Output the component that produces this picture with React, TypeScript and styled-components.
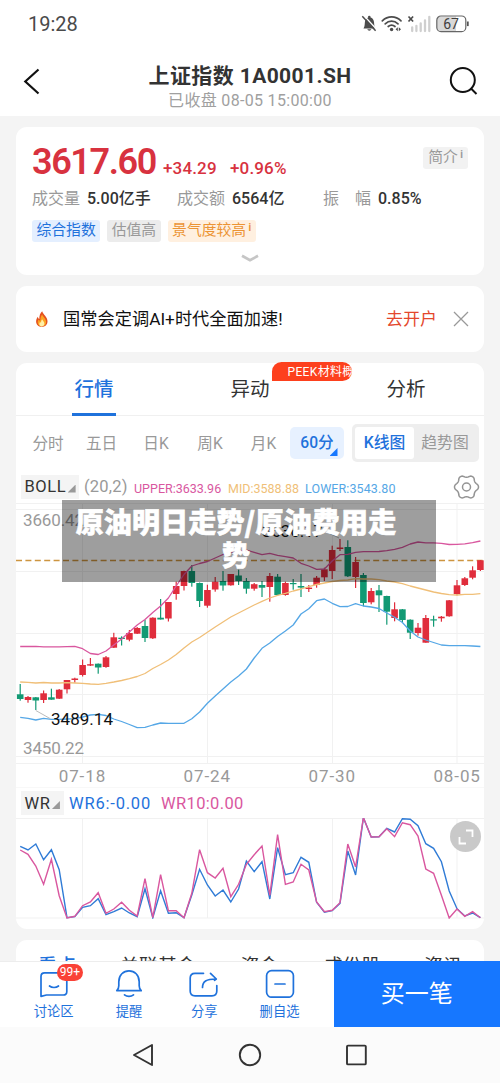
import React from 'react';
import styled, { createGlobalStyle } from 'styled-components';

const BLUE = '#1f72dc';
const RED = '#e02d3c';
const GREEN = '#129a74';
const PINK = '#d9579f';
const ORANGE = '#f0bf78';
const SKY = '#55a7e6';

const GlobalStyle = createGlobalStyle`
  * { box-sizing: border-box; }
  body {
    margin: 0;
    background: #f4f4f4;
    font-family: Roboto, "Noto Sans CJK SC", sans-serif;
    color: #333;
    overflow: hidden;
  }
  svg { display: block; flex: none; }
`;

const Screen = styled.div`
  width: 500px;
  height: 1083px;
  display: flex;
  flex-direction: column;
  overflow: hidden;
  background: #f4f4f4;
  white-space: nowrap;
`;

/* ---------- status bar and header ---------- */
const StatusBar = styled.div`
  height: 48px;
  flex: none;
  background: #fff;
  display: flex;
  align-items: center;
  justify-content: space-between;
  padding: 0 30px 0 28px;
`;
const Clock = styled.span`
  font-size: 20px;
  line-height: 24px;
  color: #4a4a4a;
`;
const Header = styled.header`
  height: 67.5px;
  flex: none;
  background: #fff;
  display: flex;
  justify-content: space-between;
  align-items: flex-start;
  padding: 16px 22px 0;
`;
const TitleBlock = styled.div`
  display: flex;
  flex-direction: column;
  align-items: center;
  margin-top: -1px;
`;
const Title = styled.h1`
  margin: 0;
  font-size: 21px;
  line-height: 26px;
  font-weight: 700;
  color: #333;
  letter-spacing: 0.4px;
`;
const Subtitle = styled.span`
  font-size: 16px;
  line-height: 20px;
  margin-top: 2px;
  color: #a0a0a0;
  letter-spacing: 0.32px;
`;

/* ---------- cards ---------- */
const Content = styled.main`
  flex: 1;
  min-height: 0;
  overflow: hidden;
  display: flex;
  flex-direction: column;
  gap: 11px;
  padding: 11.5px 16px 0;
`;
const Card = styled.section<{ $h: number }>`
  flex: none;
  height: ${(p) => p.$h}px;
  background: #fff;
  border-radius: 11px;
`;
const QuoteCard = styled(Card)`
  padding: 17px 16px 0;
  display: flex;
  flex-direction: column;
`;
const PriceRow = styled.div`
  display: flex;
  align-items: baseline;
  height: 36px;
  line-height: 36px;
  color: #d8323f;
`;
const Price = styled.span`
  font-size: 36px;
  font-weight: 600;
  letter-spacing: -1.4px;
  width: 131px;
`;
const Change = styled.span<{ $w: number }>`
  font-size: 17px;
  font-weight: 500;
  letter-spacing: 0.15px;
  width: ${(p) => p.$w}px;
`;
const Spacer = styled.span`
  flex: 1;
`;
const StatsRow = styled.div`
  display: flex;
  height: 24px;
  line-height: 24px;
  margin-top: 6.5px;
  font-size: 16px;
`;
const Stat = styled.div<{ $w: number }>`
  width: ${(p) => p.$w}px;
  display: flex;
  gap: 7px;
`;
const StatLabel = styled.span`
  color: #999;
`;
const StatValue = styled.span`
  font-weight: 500;
  color: #333;
`;
const TagRow = styled.div`
  display: flex;
  gap: 7px;
  margin-top: 9.5px;
`;
const Tag = styled.span<{ $bg: string; $fg: string }>`
  display: flex;
  height: 21.5px;
  line-height: 20.5px;
  padding: 0 4.5px;
  border-radius: 3px;
  font-size: 14.8px;
  background: ${(p) => p.$bg};
  color: ${(p) => p.$fg};
`;
const IntroTag = styled(Tag)`
  align-self: flex-start;
  margin-top: 3px;
  padding: 0 5px;
`;
const Info = styled.i`
  font-style: normal;
  font-size: 10px;
  line-height: 15px;
  font-weight: 700;
  margin-left: 2.5px;
`;
const ChevronRow = styled.div`
  display: flex;
  justify-content: center;
  padding-top: 12px;
`;
const NoticeCard = styled(Card)`
  display: flex;
  align-items: center;
  padding: 0 15px 0 18px;
`;
const NoticeText = styled.span`
  font-size: 17.2px;
  margin: 0 0 3px 13px;
  color: #111;
  letter-spacing: 0.04px;
`;
const NoticeLink = styled.span`
  font-size: 17px;
  color: #e4472c;
  margin: 0 16px 3px 0;
`;

/* ---------- quote tabs ---------- */
const ChartCard = styled(Card)`
  display: flex;
  flex-direction: column;
  position: relative;
`;
const Tabs = styled.div`
  display: flex;
  height: 53px;
  border-bottom: 1px solid #f0f0f0;
`;
const Tab = styled.div<{ $active?: boolean }>`
  flex: 1;
  display: flex;
  justify-content: center;
  position: relative;
  font-size: 19.5px;
  line-height: 53px;
  color: ${(p) => (p.$active ? BLUE : '#333')};
  font-weight: ${(p) => (p.$active ? 500 : 400)};
  &::after {
    content: '';
    position: absolute;
    bottom: -1px;
    width: 44px;
    height: 3px;
    background: ${(p) => (p.$active ? BLUE : 'transparent')};
  }
`;
const HotBadge = styled.span`
  position: absolute;
  left: 100px;
  top: -1px;
  width: 80px;
  height: 19px;
  padding-left: 15.5px;
  overflow: hidden;
  border-radius: 10px 10px 10px 0;
  background: #fd401d;
  color: #fff;
  font-size: 12px;
  font-weight: 400;
  line-height: 20px;
  letter-spacing: 0.35px;
`;
const PeriodRow = styled.div`
  display: flex;
  align-items: center;
  height: 54px;
  padding-right: 5px;
`;
const Period = styled.span<{ $w: number }>`
  width: ${(p) => p.$w}px;
  font-size: 15.6px;
  margin-bottom: 3px;
  color: #999;
  text-align: center;
`;
const PeriodActive = styled.span`
  width: 54px;
  height: 32px;
  line-height: 33px;
  border-radius: 5px;
  background: #e7f1ff;
  color: ${BLUE};
  font-size: 15.6px;
  font-weight: 500;
  display: flex;
  justify-content: center;
  position: relative;
`;
const Corner = styled.i<{ $size: number; $color: string }>`
  width: ${(p) => p.$size}px;
  height: ${(p) => p.$size}px;
  background: ${(p) => p.$color};
  clip-path: polygon(100% 0, 100% 100%, 0 100%);
`;
const PeriodCorner = styled(Corner)`
  position: absolute;
  right: 6.5px;
  bottom: 3px;
`;
const Segment = styled.div`
  display: flex;
  margin-left: 8px;
  width: 127px;
  height: 38px;
  padding: 3px;
  border-radius: 5px;
  background: #eee;
`;
const SegmentItem = styled.span<{ $active?: boolean }>`
  flex: ${(p) => (p.$active ? '0 0 59px' : '1')};
  text-align: center;
  line-height: 31px;
  font-size: 15.8px;
  border-radius: 3px;
  font-weight: ${(p) => (p.$active ? 500 : 400)};
  color: ${(p) => (p.$active ? BLUE : '#999')};
  background: ${(p) => (p.$active ? '#fff' : 'transparent')};
`;
const IndicatorRow = styled.div<{ $h: number }>`
  display: flex;
  align-items: center;
  height: ${(p) => p.$h}px;
  padding: 0 4.5px;
`;
const IndicatorButton = styled.span<{ $w: number }>`
  display: flex;
  align-items: center;
  gap: 1.5px;
  width: ${(p) => p.$w}px;
  height: 24px;
  padding-left: 4px;
  background: #f4f4f4;
  font-size: 16.5px;
  letter-spacing: 0.55px;
  color: #333;
`;
const SmallCorner = styled(Corner)`
  margin-top: 4px;
`;
const IndicatorValue = styled.span<{ $c: string; $w: number; $size: number; $ls?: number; $pl?: number }>`
  width: ${(p) => p.$w}px;
  font-size: ${(p) => p.$size}px;
  color: ${(p) => p.$c};
  letter-spacing: ${(p) => p.$ls || 0}px;
  padding-left: ${(p) => p.$pl || 0}px;
  padding-top: ${(p) => (p.$size < 14 ? 3 : 0)}px;
`;
const ChartText = styled.text`
  font-family: Roboto, sans-serif;
  font-size: 17px;
`;
const ExpandButton = styled.span`
  position: absolute;
  right: 3px;
  bottom: 77px;
  width: 31px;
  height: 31px;
  border-radius: 50%;
  background: #c9c9c9;
  display: flex;
  align-items: center;
  justify-content: center;
`;
const Caption = styled.div`
  position: absolute;
  left: 46px;
  top: 137px;
  width: 374px;
  height: 82px;
  padding: 5px 38.5px 0 12.5px;
  background: rgba(0, 0, 0, 0.38);
  color: #fff;
  font-family: "Noto Sans CJK SC", sans-serif;
  font-weight: 900;
  font-size: 28px;
  line-height: 33px;
  letter-spacing: 0.15px;
  -webkit-text-stroke: 0.6px #fff;
  text-align: center;
`;

/* ---------- lower tabs, actions, navigation ---------- */
const NewsTabs = styled(Card)`
  display: flex;
  font-size: 19px;
  line-height: 53px;
`;
const NewsTab = styled.span<{ $w: number; $active?: boolean }>`
  width: ${(p) => p.$w}px;
  text-align: center;
  color: ${(p) => (p.$active ? BLUE : '#333')};
  font-weight: ${(p) => (p.$active ? 500 : 400)};
`;
const ActionBar = styled.div`
  height: 66px;
  flex: none;
  display: flex;
  background: #fff;
  padding-left: 16px;
  border-top: 1px solid #ededed;
`;
const Action = styled.div`
  width: 75.3px;
  display: flex;
  flex-direction: column;
  align-items: center;
  padding-top: 6px;
  gap: 4px;
  position: relative;
  font-size: 13.3px;
  line-height: 19px;
  color: ${BLUE};
`;
const CountBadge = styled.span`
  position: absolute;
  left: 41px;
  top: 2px;
  width: 26px;
  height: 17px;
  border-radius: 9px;
  background: #fa4136;
  color: #fff;
  font-size: 12px;
  line-height: 17px;
  text-align: center;
`;
const BuyButton = styled.div`
  margin-left: auto;
  margin-top: -1px;
  width: 166.5px;
  height: 66px;
  background: #1677ff;
  color: #fff;
  font-size: 24px;
  line-height: 67px;
  text-align: center;
`;
const NavBar = styled.nav`
  height: 56px;
  flex: none;
  background: #fbfbfb;
  display: flex;
  justify-content: center;
  align-items: center;
  gap: 84px;
`;

/* ---------- chart data ---------- */
const X0 = 4.2;
const STEP = 7.8;
const px = (i: number) => X0 + STEP * i;

// [rising, body top, body bottom, high, low]
const candles: [number, number, number, number, number][] = [
  [0, 694.3, 699, 684, 700.7], [1, 697, 700, 696, 702.7], [0, 697.3, 700.5, 697, 710], [1, 693.3, 700, 690.5, 703],
  [0, 697.3, 699.7, 688.7, 699.7], [1, 689.7, 698.7, 689, 699], [1, 680, 689.3, 680, 693.5], [1, 678.5, 680, 677.7, 682.7],
  [1, 665, 675, 659.5, 676.5], [1, 664.2, 665.6, 658, 666], [0, 663.7, 667.5, 663.5, 673.7], [1, 657.3, 667, 656, 667.8],
  [1, 637.3, 647.7, 632.8, 648], [0, 637.7, 639, 636.3, 645.5], [1, 633, 639.7, 630, 641.3], [1, 628, 633.7, 627, 634],
  [0, 626, 638, 620, 642], [1, 617.7, 638.3, 617.3, 639], [0, 617.7, 619.5, 599, 619.5], [1, 602, 618.5, 602, 621.5],
  [1, 586, 594, 581.7, 599.7], [1, 571, 586, 570.7, 590.5], [0, 571, 583, 565, 586.7], [0, 583, 601, 582.5, 607],
  [1, 590, 605.7, 584.7, 607.7], [1, 581.7, 589.5, 577, 591.7], [0, 581, 585.5, 571, 590.7], [1, 574, 585.3, 574, 585.7],
  [0, 575.5, 581, 569.7, 585], [0, 581, 588.7, 578, 593.7], [1, 584.2, 588.7, 583, 590.7], [0, 585, 587.7, 581, 597],
  [1, 576, 587, 573, 601.7], [0, 576.7, 595, 574, 595.7], [1, 583, 595, 581.7, 595.7], [0, 583, 584.2, 579, 589.7],
  [0, 586, 587.6, 574, 597], [1, 587.6, 589, 585, 592], [1, 577.7, 585, 576, 587.7], [1, 569.3, 577.3, 567.7, 581],
  [1, 550, 571, 545.7, 579], [1, 547.5, 549, 539, 551], [0, 547, 576.3, 540.3, 577], [1, 562, 577, 557, 588],
  [0, 575, 603, 573, 606.3], [1, 591, 602.3, 588, 604.3], [0, 590.3, 595.3, 585, 612], [0, 596, 611.7, 595.7, 624.7],
  [1, 609.3, 618, 602.3, 621.3], [0, 609.3, 620, 609, 622], [0, 619.7, 632.7, 619.3, 639], [1, 627.7, 633, 623, 635.7],
  [1, 618, 642.7, 615, 642.7], [0, 619.3, 620.5, 615.7, 626.7], [1, 616.7, 618.3, 616, 621.7], [1, 600.3, 616.3, 600, 616.7],
  [1, 585.3, 594, 580, 595.3], [1, 578.3, 585, 577, 586], [1, 570.3, 577.7, 566.3, 579.3], [1, 560.3, 570, 560, 571],
];

const upper = [646.5, 646.5, 646.3, 646.8, 646.8, 646.8, 646.6, 646.3, 648.7, 653.5, 654.5, 651, 645, 639, 632, 625, 619.5, 612.5, 606, 598, 586, 574.5, 566, 563.5, 561.5, 558, 554.5, 552, 551.7, 550, 552.3, 554.7, 553.3, 555.3, 556.7, 558, 563.3, 566, 569.3, 569, 561, 554.7, 554.3, 552.3, 551.7, 551.7, 551.5, 550.7, 549.3, 547.3, 544, 542, 542.8, 542.8, 543.3, 544.5, 544.3, 543.8, 542.7, 541];
const middle = [682, 682.3, 683, 682.5, 683, 683, 682.7, 683, 683.3, 684, 684.3, 683.3, 682, 680.5, 678.7, 676.5, 673.5, 668.5, 664.5, 660, 654.5, 648, 642, 637.5, 632.3, 627, 622, 617, 613, 609, 605, 601.3, 598, 595.3, 593.3, 591, 589, 586.7, 584.5, 583, 581.5, 580.5, 580, 578.7, 579, 579, 579.7, 581, 582, 583.7, 586, 588, 590, 592, 593.5, 594.7, 595, 594.3, 594.3, 593.7];
const lower = [717.3, 718.3, 720, 718.3, 719.3, 719.3, 719, 718.7, 717, 715, 714.3, 715.5, 719, 721.5, 724.5, 727.7, 727.3, 725, 723, 723.3, 723.3, 723.3, 718.7, 712, 703.3, 696, 689, 682, 676, 669, 658, 648.3, 643, 636.5, 631, 625, 614, 608.7, 600.7, 599, 603.3, 606.7, 606.5, 603.7, 606, 607, 608.5, 613, 617.3, 622.5, 631, 637, 640, 642.5, 645, 645.7, 645.7, 645.7, 646, 646.5];

// Williams %R in thirds of a pixel below the top of its row
const wr6 = [184, 195, 177, 224, 194, 254, 398, 395, 367, 362, 341, 389, 380, 369, 384, 395, 311, 398, 317, 385, 383, 398, 330, 253, 300, 333, 315, 351, 312, 228, 260, 230, 342, 188, 269, 263, 217, 232, 352, 382, 377, 355, 198, 270, 98, 156, 155, 130, 141, 101, 103, 122, 176, 190, 230, 318, 371, 393, 384, 398];
const wr10 = [195, 208, 243, 298, 223, 332, 399, 394, 362, 351, 323, 385, 372, 352, 376, 393, 281, 398, 269, 377, 377, 398, 325, 194, 263, 279, 250, 335, 298, 238, 209, 183, 331, 149, 298, 291, 238, 255, 351, 380, 376, 353, 177, 246, 98, 156, 155, 131, 155, 113, 119, 153, 252, 265, 331, 399, 372, 394, 380, 398];

const KTOP = 503;
const WTOP = 818;
const line = (ys: number[], f: (y: number) => number) => ys.map((y, i) => `${px(i).toFixed(1)},${f(y).toFixed(1)}`).join(' ');
const columns = [66.5, 191.5, 316.5, 441];

function KLineChart() {
  const y = (v: number) => v - KTOP;
  return (
    <svg width="468" height="285" viewBox="0 0 468 285">
      <g stroke="#f1f1f1" strokeWidth="1">
        {[0.5, 6.5, 68.5, 130.5, 191.5, 253.5, 260.5, 285].map((v) => <line key={v} x1="0" x2="468" y1={v} y2={v} />)}
        {columns.map((x) => <line key={x} x1={x} x2={x} y1="0" y2="260" />)}
      </g>
      <line x1="0" x2="468" y1="57.5" y2="57.5" stroke="#cd9540" strokeWidth="1.4" strokeDasharray="6 3.4" />
      <ChartText x="7" y="22.7" fill="#999" textLength="61">3660.42</ChartText>
      <ChartText x="7" y="250.5" fill="#999" textLength="61">3450.22</ChartText>
      {candles.map(([up, t, b, hi, lo], i) => (
        <g key={i} fill={up ? RED : GREEN}>
          <rect x={px(i) - 0.6} y={y(hi)} width="1.2" height={lo - hi} />
          <rect x={px(i) - 3.3} y={y(t)} width="6.6" height={b - t} />
        </g>
      ))}
      <g fill="none" strokeWidth="1.3" strokeLinejoin="round">
        <polyline points={line(upper, y)} stroke={PINK} />
        <polyline points={line(middle, y)} stroke={ORANGE} />
        <polyline points={line(lower, y)} stroke={SKY} />
      </g>
      <path d="M19.8 207.5 34 215.5M307 27l16 8" stroke="#bbb" strokeWidth="1" fill="none" />
      <ChartText x="35" y="222" fill="#111" textLength="62">3489.14</ChartText>
      <ChartText x="246" y="34" fill="#111" textLength="61">3636.17</ChartText>
      {['07-18', '07-24', '07-30', '08-05'].map((d, i) => (
        <ChartText key={d} x={42.7 + i * 124.9} y="278.6" fill="#999" textLength="46.5">{d}</ChartText>
      ))}
    </svg>
  );
}

function WRChart() {
  const y = (v: number) => 785 + v / 3 - WTOP;
  return (
    <svg width="468" height="101" viewBox="0 0 468 101">
      <g stroke="#f1f1f1" strokeWidth="1">
        <line x1="0" x2="468" y1="0.5" y2="0.5" />
        <line x1="0" x2="468" y1="100" y2="100" />
        {columns.map((x) => <line key={x} x1={x} x2={x} y1="0" y2="100" />)}
      </g>
      <g fill="none" strokeWidth="1.4" strokeLinejoin="miter">
        <polyline points={line(wr6, y)} stroke="#2f7bd6" />
        <polyline points={line(wr10, y)} stroke={PINK} />
      </g>
    </svg>
  );
}

// Six soft lobes around a centre hole
const gearPoints = Array.from({ length: 72 }, (_, k) => {
  const a = (k * Math.PI) / 36;
  const c = Math.cos(6 * a);
  const r = 10.9 + 1.1 * Math.sign(c) * Math.pow(Math.abs(c), 0.7);
  return `${(13.5 + r * Math.cos(a)).toFixed(2)},${(13 + r * Math.sin(a)).toFixed(2)}`;
}).join(' ');

function Gear() {
  return (
    <svg width="27" height="26" viewBox="0 0 27 26" fill="none" stroke="#949494" strokeWidth="1.5" strokeLinejoin="round">
      <polygon points={gearPoints} />
      <circle cx="13.5" cy="13" r="4" />
    </svg>
  );
}

function StatusIcons() {
  return (
    <svg width="110" height="20" viewBox="0 0 110 20" fill="none">
      <path d="M3.5 14.4C5 12.6 4.6 9.5 5 7.6 5.6 4.900 7 3.600 9 3.300c3 0 4.600 1.800 5 4.600.3 2.500 0 4.700 1.700 6.500Z" fill="#4c4c4c" />
      <circle cx="9.300" cy="3" r="1.300" fill="#4c4c4c" />
      <path d="M7.300 15.300h4c-.5 1.800-3.500 1.800-4 0Z" fill="#4c4c4c" />
      <path d="M3.600 1.200 17 15.800" stroke="#fff" strokeWidth="1.300" />
      <path d="M2.300 2.300 15.600 16.800" stroke="#4c4c4c" strokeWidth="1.500" />
      <g stroke="#4c4c4c" strokeWidth="1.700" strokeLinecap="round">
        <path d="M22.300 6.800c5.500-5.200 13.200-5.200 18.700 0" />
        <path d="M25.200 9.800c3.800-3.600 9-3.600 12.800 0" />
        <path d="M28.200 12.500c2-1.700 4.800-1.700 6.800 0" />
      </g>
      <circle cx="31.600" cy="15.500" r="1.700" fill="#4c4c4c" />
      <path d="M37.800 13.200v4l-2.200-2zM38.800 13.200v4l2.200-2z" fill="#4c4c4c" />
      <path d="m48.500 2.500 4.600 5M53.100 2.500l-4.600 5" stroke="#4c4c4c" strokeWidth="1.700" />
      <path d="M52.200 13.500v3.500M56.400 11.800v5.200M60.700 9.300v7.700M65 6.300v10.700M69.300 2.800v14.200" stroke="#cfcfcf" strokeWidth="2.300" strokeLinecap="round" />
      <path d="M81 2.400h15v15H81c-3 0-4.200-1.400-4.200-4.200V6.600c0-2.800 1.200-4.200 4.200-4.200Z" fill="#d8d8d8" />
      <rect x="76.800" y="2" width="29" height="15.600" rx="4.200" stroke="#666" strokeWidth="1.200" />
      <path d="M107.800 7.500v4.600" stroke="#555" strokeWidth="1.800" />
      <text x="91" y="14.700" textAnchor="middle" fontFamily="Roboto" fontSize="14" fill="#404040">67</text>
    </svg>
  );
}

function Flame() {
  return (
    <svg width="16" height="18" viewBox="0 0 16 18">
      <path d="M8.200 1.200c.8 3.300 5.300 5.400 5.300 10 0 3.600-2.400 5.600-5.700 5.600-3.500 0-5.700-2.300-5.700-5.300 0-2.100.9-3.500 1.700-4.700.3 1.200.8 1.900 1.500 2.200C5.200 5.800 6.200 3 8.200 1.200Z" fill="#e4501f" />
      <path d="M8.200 4.500c.8 2.500 3.900 4.200 3.900 7.500 0 2.900-1.800 4.300-4.200 4.300s-4.200-1.500-4.200-3.900c0-1.300.5-2.200 1-2.900.5 1 1.200 1.200 1.700 1.100C6.300 8.500 6.900 6 8.200 4.500Z" fill="#fca321" />
      <path d="M8.200 9.300c.3 1.500 2.200 2.300 2.200 4.300 0 1.800-1 2.800-2.500 2.800s-2.600-1-2.600-2.500c0-.9.4-1.500.8-1.900.3.500.7.700 1 .6-.1-1.200.3-2.400 1.100-3.300Z" fill="#fff0a8" />
    </svg>
  );
}

export default function App() {
  return (
    <Screen>
      <GlobalStyle />
      <StatusBar>
        <Clock>19:28</Clock>
        <StatusIcons />
      </StatusBar>
      <Header>
        <svg width="30" height="36" viewBox="0 0 30 36" fill="none">
          <path d="M16.500 5.500 3.300 17.500l13.200 12" stroke="#111" strokeWidth="2.200" />
        </svg>
        <TitleBlock>
          <Title>上证指数 1A0001.SH</Title>
          <Subtitle>已收盘 08-05 15:00:00</Subtitle>
        </TitleBlock>
        <svg width="30" height="36" viewBox="0 0 30 36" fill="none" stroke="#111" strokeWidth="2">
          <circle cx="14.800" cy="16" r="12" />
          <path d="m23 24.500 5.500 5.500" />
        </svg>
      </Header>

      <Content>
        <QuoteCard $h={148}>
          <PriceRow>
            <Price>3617.60</Price>
            <Change $w={67}>+34.29</Change>
            <Change $w={70}>+0.96%</Change>
            <Spacer />
            <IntroTag $bg="#f2f2f2" $fg="#999">简介<Info>i</Info></IntroTag>
          </PriceRow>
          <StatsRow>
            <Stat $w={145}><StatLabel>成交量</StatLabel><StatValue>5.00亿手</StatValue></Stat>
            <Stat $w={146}><StatLabel>成交额</StatLabel><StatValue>6564亿</StatValue></Stat>
            <Stat $w={110}><StatLabel>振　幅</StatLabel><StatValue>0.85%</StatValue></Stat>
          </StatsRow>
          <TagRow>
            <Tag $bg="#e4efff" $fg={BLUE}>综合指数</Tag>
            <Tag $bg="#ececec" $fg="#999">估值高</Tag>
            <Tag $bg="#fff0e0" $fg="#ec9434">景气度较高<Info>i</Info></Tag>
          </TagRow>
          <ChevronRow>
            <svg width="18" height="10" viewBox="0 0 18 10" fill="none">
              <path d="m1 1.800 8 4.500 8-4.500" stroke="#c6c6c6" strokeWidth="2.700" />
            </svg>
          </ChevronRow>
        </QuoteCard>

        <NoticeCard $h={66}>
          <Flame />
          <NoticeText>国常会定调AI+时代全面加速!</NoticeText>
          <Spacer />
          <NoticeLink>去开户</NoticeLink>
          <svg width="16" height="16" viewBox="0 0 16 16" fill="none">
            <path d="m1 1 14 14M15 1 1 15" stroke="#999" strokeWidth="1.300" />
          </svg>
        </NoticeCard>

        <ChartCard $h={566}>
          <Tabs>
            <Tab $active>行情</Tab>
            <Tab>异动<HotBadge>PEEK材料概念</HotBadge></Tab>
            <Tab>分析</Tab>
          </Tabs>
          <PeriodRow>
            <Period $w={64}>分时</Period>
            <Period $w={43}>五日</Period>
            <Period $w={66}>日K</Period>
            <Period $w={42}>周K</Period>
            <Period $w={65}>月K</Period>
            <PeriodActive style={{ marginLeft: -6 }}>60分<PeriodCorner $size={8} $color="#1677ff" /></PeriodActive>
            <Segment>
              <SegmentItem $active>K线图</SegmentItem>
              <SegmentItem>趋势图</SegmentItem>
            </Segment>
          </PeriodRow>
          <IndicatorRow $h={33}>
            <IndicatorButton $w={58.5}>BOLL<SmallCorner $size={8} $color="#999" /></IndicatorButton>
            <IndicatorValue $c="#999" $w={55} $size={16.5} $pl={5} $ls={0.2}>(20,2)</IndicatorValue>
            <IndicatorValue $c={PINK} $w={94} $size={12.5}>UPPER:3633.96</IndicatorValue>
            <IndicatorValue $c={ORANGE} $w={77} $size={12.5}>MID:3588.88</IndicatorValue>
            <IndicatorValue $c={SKY} $w={94} $size={12.5} $ls={0.1}>LOWER:3543.80</IndicatorValue>
            <Spacer />
            <Gear />
          </IndicatorRow>
          <KLineChart />
          <IndicatorRow $h={30}>
            <IndicatorButton $w={43.5}>WR<SmallCorner $size={8} $color="#999" /></IndicatorButton>
            <IndicatorValue $c={BLUE} $w={97} $size={16.5} $pl={5} $ls={0.8}>WR6:-0.00</IndicatorValue>
            <IndicatorValue $c={PINK} $w={90} $size={16.5} $ls={0.35}>WR10:0.00</IndicatorValue>
          </IndicatorRow>
          <WRChart />
          <ExpandButton>
            <svg width="16" height="16" viewBox="0 0 16 16" fill="none" stroke="#fff" strokeWidth="1.800">
              <path d="M8 1.500h6.500V8M1.500 8v6.500H8" />
            </svg>
          </ExpandButton>
          <Caption>原油明日走势/原油费用走<br />势</Caption>
        </ChartCard>

        <NewsTabs $h={60}>
          <NewsTab $w={82} $active>看点</NewsTab>
          <NewsTab $w={120}>关联基金</NewsTab>
          <NewsTab $w={83}>资金</NewsTab>
          <NewsTab $w={102}>成份股</NewsTab>
          <NewsTab $w={80}>资讯</NewsTab>
        </NewsTabs>
      </Content>

      <ActionBar>
        <Action>
          <svg width="30" height="30" viewBox="0 0 30 30" fill="none" stroke={BLUE} strokeWidth="1.700" strokeLinecap="round" strokeLinejoin="round">
            <path d="M5.600 4.800h18.600c2.500 0 3.600 1 3.600 3.600v15c0 2.500-1.100 3.600-3.600 3.600H7.500L2 28.300V8.400c0-2.600 1.100-3.600 3.600-3.600Z" />
            <path d="M10.500 18c2.500 2 6.500 2 9 0" />
          </svg>
          讨论区
          <CountBadge>99+</CountBadge>
        </Action>
        <Action>
          <svg width="30" height="30" viewBox="0 0 30 30" fill="none" stroke={BLUE} strokeWidth="1.700" strokeLinecap="round" strokeLinejoin="round">
            <path d="M2.800 22.700h24.400c-1.500-1.500-2-3-2-5v-4C25.200 6.900 20.500 2.900 15 2.900S4.800 6.900 4.800 13.700v4c0 2-.5 3.500-2 5Z" />
            <path d="M10.500 26.800c2.500 2 6.500 2 9 0" />
          </svg>
          提醒
        </Action>
        <Action>
          <svg width="30" height="30" viewBox="0 0 30 30" fill="none" stroke={BLUE} strokeWidth="1.700" strokeLinecap="round" strokeLinejoin="round">
            <path d="M14.500 5.300H6c-3.200 0-4.800 1.600-4.800 4.800v13c0 3.200 1.600 4.800 4.800 4.800h17c3.200 0 4.800-1.600 4.800-4.800V17.500" />
            <path d="M13.500 19.500c0-6 3.500-8.500 13.800-8.500L21.500 5.300M27.300 11l-1.800 1.300" />
          </svg>
          分享
        </Action>
        <Action>
          <svg width="30" height="30" viewBox="0 0 30 30" fill="none" stroke={BLUE} strokeWidth="1.700" strokeLinecap="round">
            <rect x="1.600" y="2.600" width="26.800" height="26.600" rx="5" />
            <path d="M10 16h10" />
          </svg>
          删自选
        </Action>
        <BuyButton>买一笔</BuyButton>
      </ActionBar>

      <NavBar>
        <svg width="22" height="24" viewBox="0 0 22 24" fill="none" stroke="#333" strokeWidth="1.900" strokeLinejoin="round">
          <path d="M20 2 2 12l18 10Z" />
        </svg>
        <svg width="24" height="24" viewBox="0 0 24 24" fill="none" stroke="#333" strokeWidth="1.900">
          <circle cx="12" cy="12" r="10.200" />
        </svg>
        <svg width="22" height="22" viewBox="0 0 22 22" fill="none" stroke="#333" strokeWidth="1.900">
          <rect x="1" y="1.600" width="18.800" height="18.800" rx="1" />
        </svg>
      </NavBar>
    </Screen>
  );
}
